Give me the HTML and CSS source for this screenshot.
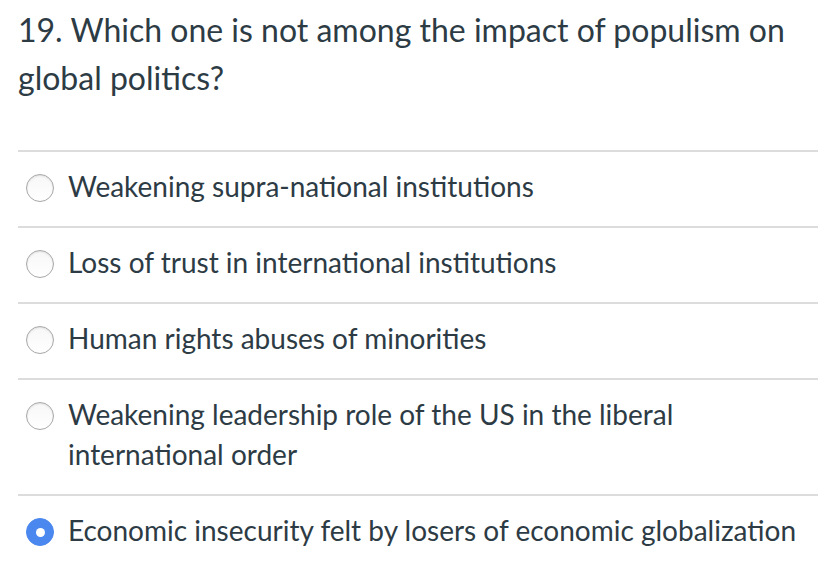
FILE: index.html
```html
<!DOCTYPE html>
<html>
<head>
<meta charset="utf-8">
<link rel="stylesheet" href="styles.css">
</head>
<body>
<div class="question">
  <div class="q-text">19. Which one is not among the impact of populism on global politics?</div>
  <div class="answers">
    <label class="answer"><span class="radio"></span><span class="a-text">Weakening supra-national institutions</span></label>
    <label class="answer"><span class="radio"></span><span class="a-text">Loss of trust in international institutions</span></label>
    <label class="answer"><span class="radio"></span><span class="a-text">Human rights abuses of minorities</span></label>
    <label class="answer"><span class="radio"></span><span class="a-text">Weakening leadership role of the US in the liberal international order</span></label>
    <label class="answer"><span class="radio checked"></span><span class="a-text">Economic insecurity felt by losers of economic globalization</span></label>
  </div>
</div>
</body>
</html>
```
FILE: styles.css
```css
html, body {
  margin: 0;
  padding: 0;
  background: #fff;
}
body {
  font-family: Lato, "Noto Sans", sans-serif;
  color: #2d3b45;
  width: 818px;
  height: 563px;
  overflow: hidden;
}
.question {
  padding-left: 18px;
}
.q-text {
  font-size: 32px;
  line-height: 48px;
  padding-top: 6px;
  padding-right: 20px;
  height: 96px;
  margin-bottom: 48px;
}
.answers {
  display: flex;
  flex-direction: column;
}
.answer {
  display: flex;
  align-items: flex-start;
  border-top: 2px solid #dcdcdc;
  padding: 14px 0 20px 8px;
  font-size: 28px;
  line-height: 40px;
}
.radio {
  flex: none;
  width: 26px;
  height: 26px;
  margin-top: 8px;
  margin-right: 14px;
  border-radius: 50%;
  border: 1px solid #a8a8a8;
  background: linear-gradient(#f7f7f7, #fff);
  box-shadow: inset 0 1px 2px rgba(0,0,0,0.1);
  position: relative;
}
.radio.checked {
  border-color: #4a87ee;
  background: #4a87ee;
  box-shadow: none;
}
.radio.checked::after {
  content: "";
  position: absolute;
  left: 50%;
  top: 50%;
  width: 9px;
  height: 9px;
  margin: -4.5px 0 0 -4.5px;
  border-radius: 50%;
  background: #fff;
}
.a-text {
  padding-right: 20px;
}
```
